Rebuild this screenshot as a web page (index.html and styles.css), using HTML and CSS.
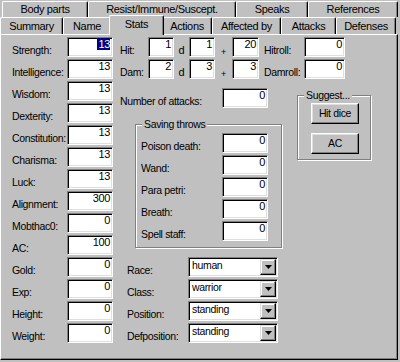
FILE: index.html
```html
<!DOCTYPE html>
<html lang="en">
<head>
    <meta charset="UTF-8">
    <title>Mobile - Stats</title>
    <link rel="stylesheet" href="styles.css">
</head>
<body>
    <div class="dialog">
        <div class="tab-row back">
            <div class="tab w-body">Body parts</div>
            <div class="tab w-resist">Resist/Immune/Suscept.</div>
            <div class="tab w-speaks">Speaks</div>
            <div class="tab w-refs">References</div>
        </div>
        <div class="tab-row front">
            <div class="tab w-summary">Summary</div>
            <div class="tab w-name">Name</div>
            <div class="tab w-stats active">Stats</div>
            <div class="tab w-actions">Actions</div>
            <div class="tab w-affected">Affected by</div>
            <div class="tab w-attacks">Attacks</div>
            <div class="tab w-defenses">Defenses</div>
        </div>

        <div class="panel">
            <div class="stats-col">
                <span class="lbl">Strength:</span><div class="edit"><span class="sel">13</span></div>
                <span class="lbl">Intelligence:</span><div class="edit">13</div>
                <span class="lbl">Wisdom:</span><div class="edit">13</div>
                <span class="lbl">Dexterity:</span><div class="edit">13</div>
                <span class="lbl">Constitution:</span><div class="edit">13</div>
                <span class="lbl">Charisma:</span><div class="edit">13</div>
                <span class="lbl">Luck:</span><div class="edit">13</div>
                <span class="lbl">Alignment:</span><div class="edit">300</div>
                <span class="lbl">Mobthac0:</span><div class="edit">0</div>
                <span class="lbl">AC:</span><div class="edit">100</div>
                <span class="lbl">Gold:</span><div class="edit">0</div>
                <span class="lbl">Exp:</span><div class="edit">0</div>
                <span class="lbl">Height:</span><div class="edit">0</div>
                <span class="lbl">Weight:</span><div class="edit">0</div>
            </div>

            <div class="main-col">
                <div class="dice">
                    <span class="lbl">Hit:</span>
                    <div class="edit">1</div>
                    <span class="op">d</span>
                    <div class="edit">1</div>
                    <span class="op plus">+</span>
                    <div class="edit">20</div>
                    <span class="lbl roll">Hitroll:</span>
                    <div class="edit">0</div>

                    <span class="lbl">Dam:</span>
                    <div class="edit">2</div>
                    <span class="op">d</span>
                    <div class="edit">3</div>
                    <span class="op plus">+</span>
                    <div class="edit">3</div>
                    <span class="lbl roll">Damroll:</span>
                    <div class="edit">0</div>
                </div>

                <div class="middle">
                    <div class="middle-left">
                        <div class="attacks">
                            <span class="lbl">Number of attacks:</span>
                            <div class="edit">0</div>
                        </div>
                        <div class="group saving">
                            <span class="group-title">Saving throws</span>
                            <div class="save-grid">
                                <span class="lbl">Poison death:</span><div class="edit">0</div>
                                <span class="lbl">Wand:</span><div class="edit">0</div>
                                <span class="lbl">Para petri:</span><div class="edit">0</div>
                                <span class="lbl">Breath:</span><div class="edit">0</div>
                                <span class="lbl">Spell staff:</span><div class="edit">0</div>
                            </div>
                        </div>
                    </div>
                    <div class="group suggest">
                        <span class="group-title">Suggest...</span>
                        <div class="btn">Hit dice</div>
                        <div class="btn">AC</div>
                    </div>
                </div>

                <div class="selects">
                    <span class="lbl">Race:</span>
                    <div class="combo"><span class="combo-text">human</span><span class="drop"><svg width="7" height="4" viewBox="0 0 7 4"><polygon points="0,0 7,0 3.5,4" fill="#000"/></svg></span></div>
                    <span class="lbl">Class:</span>
                    <div class="combo"><span class="combo-text">warrior</span><span class="drop"><svg width="7" height="4" viewBox="0 0 7 4"><polygon points="0,0 7,0 3.5,4" fill="#000"/></svg></span></div>
                    <span class="lbl">Position:</span>
                    <div class="combo"><span class="combo-text">standing</span><span class="drop"><svg width="7" height="4" viewBox="0 0 7 4"><polygon points="0,0 7,0 3.5,4" fill="#000"/></svg></span></div>
                    <span class="lbl">Defposition:</span>
                    <div class="combo"><span class="combo-text">standing</span><span class="drop"><svg width="7" height="4" viewBox="0 0 7 4"><polygon points="0,0 7,0 3.5,4" fill="#000"/></svg></span></div>
                </div>
            </div>
        </div>
    </div>
</body>
</html>
```

FILE: styles.css
```css
body {
    margin: 0;
    background: #c0c0c0;
    font-family: "Liberation Sans", Arial, sans-serif;
    font-size: 10.5px;
    letter-spacing: -0.35px;
    color: #000;
}

.dialog {
    width: 400px;
    height: 362px;
    background: #c0c0c0;
    overflow: hidden;
}

/* tabs */
.tab-row {
    display: flex;
    height: 17px;
}

.tab-row.back {
    padding-left: 2px;
}

.tab {
    flex: none;
    box-sizing: border-box;
    height: 17px;
    border-top: 1px solid #fff;
    border-left: 1px solid #fff;
    border-right: 1px solid #000;
    border-radius: 2px 2px 0 0;
    box-shadow: inset -1px 0 0 #808080;
    text-align: center;
    line-height: 13px;
    padding-top: 2px;
    background: #c0c0c0;
    font-size: 11px;
}

.tab-row.back .tab {
    margin-top: 1px;
    height: 16px;
    padding-top: 1px;
}

.w-body { width: 86px; }
.w-resist { width: 148px; }
.w-speaks { width: 72px; }
.w-refs { width: 90px; }

.w-summary { width: 63px; }
.w-name { width: 48px; }
.w-stats { width: 51px; }
.w-actions { width: 52px; }
.w-affected { width: 69px; }
.w-attacks { width: 55px; }
.w-defenses { width: 60px; }

.tab.active {
    position: relative;
    z-index: 1;
    height: 20px;
    margin: -2px -2px 0 -2px;
    width: 55px;
    padding-top: 2px;
}

.tab.active + .tab {
    width: 50px;
}

/* page */
.panel {
    box-sizing: border-box;
    width: 398px;
    height: 326px;
    border-top: 1px solid #fff;
    border-left: 1px solid #fff;
    border-right: 1px solid #000;
    border-bottom: 1px solid #000;
    box-shadow: inset -1px -1px 0 #808080;
    padding: 2px 0 0 11px;
    display: flex;
    align-items: flex-start;
}

.lbl {
    line-height: 13px;
    padding-top: 7px;
    white-space: nowrap;
}

.edit {
    box-sizing: border-box;
    height: 20px;
    background: #fff;
    border: 1px solid;
    border-color: #808080 #fff #fff #808080;
    box-shadow: inset 1px 1px 0 #000, inset -1px -1px 0 #dfdfdf;
    padding: 1px 2px 0 0;
    line-height: 11px;
    text-align: right;
    overflow: hidden;
    font-size: 11px;
}

.sel {
    background: #000080;
    color: #fff;
    display: inline-block;
    height: 12px;
    line-height: 12px;
    margin-top: -1px;
    padding-left: 1px;
}

.stats-col {
    display: grid;
    grid-template-columns: 55px 46px;
    grid-auto-rows: 20px;
    row-gap: 2px;
}

.main-col {
    margin-left: 7px;
    width: 260px;
}

.dice {
    display: grid;
    grid-template-columns: 28px 26px 15px 26px 17px 27px 45px 41px;
    grid-auto-rows: 20px;
    row-gap: 2px;
}

.op {
    text-align: center;
    line-height: 13px;
    padding-top: 7px;
    font-size: 11px;
}

.op.plus {
    font-size: 9px;
    padding-top: 9px;
}

.lbl.roll {
    padding-left: 5px;
}

.middle {
    display: flex;
    align-items: flex-start;
    margin-top: 9px;
}

.middle-left {
    width: 162px;
}

.attacks {
    display: grid;
    grid-template-columns: 102px 46px;
    height: 20px;
}

.group {
    position: relative;
    box-sizing: border-box;
    border: 1px solid #808080;
    box-shadow: inset 1px 1px 0 #fff, 1px 1px 0 #fff;
}

.group-title {
    position: absolute;
    top: -7px;
    left: 6px;
    padding: 0 2px;
    background: #c0c0c0;
    line-height: 13px;
}

.saving {
    width: 147px;
    height: 124px;
    margin: 16px 0 0 15px;
    padding: 8px 0 0 5px;
}

.save-grid {
    display: grid;
    grid-template-columns: 81px 46px;
    grid-auto-rows: 20px;
    row-gap: 2px;
}

.suggest {
    width: 74px;
    height: 65px;
    margin: 7px 0 0 15px;
    padding: 7px 0 0 13px;
}

.btn {
    box-sizing: border-box;
    width: 48px;
    height: 21px;
    border: 1px solid;
    border-color: #fff #000 #000 #fff;
    box-shadow: inset -1px -1px 0 #808080, inset 1px 1px 0 #dfdfdf;
    text-align: center;
    line-height: 19px;
    margin-bottom: 9px;
}

.selects {
    display: grid;
    grid-template-columns: 61px 90px;
    grid-auto-rows: 20px;
    row-gap: 2px;
    margin-top: 9px;
    padding-left: 7px;
}

.combo {
    box-sizing: border-box;
    height: 20px;
    background: #fff;
    border: 1px solid;
    border-color: #808080 #fff #fff #808080;
    box-shadow: inset 1px 1px 0 #000, inset -1px -1px 0 #dfdfdf;
    padding: 1px;
    display: flex;
}

.combo-text {
    flex: 1;
    padding: 1px 0 0 2px;
    line-height: 11px;
}

.drop {
    box-sizing: border-box;
    width: 16px;
    height: 16px;
    background: #c0c0c0;
    border: 1px solid;
    border-color: #dfdfdf #000 #000 #dfdfdf;
    box-shadow: inset -1px -1px 0 #808080, inset 1px 1px 0 #fff;
    display: flex;
    align-items: center;
    justify-content: center;
}

.drop svg {
    display: block;
}
```
